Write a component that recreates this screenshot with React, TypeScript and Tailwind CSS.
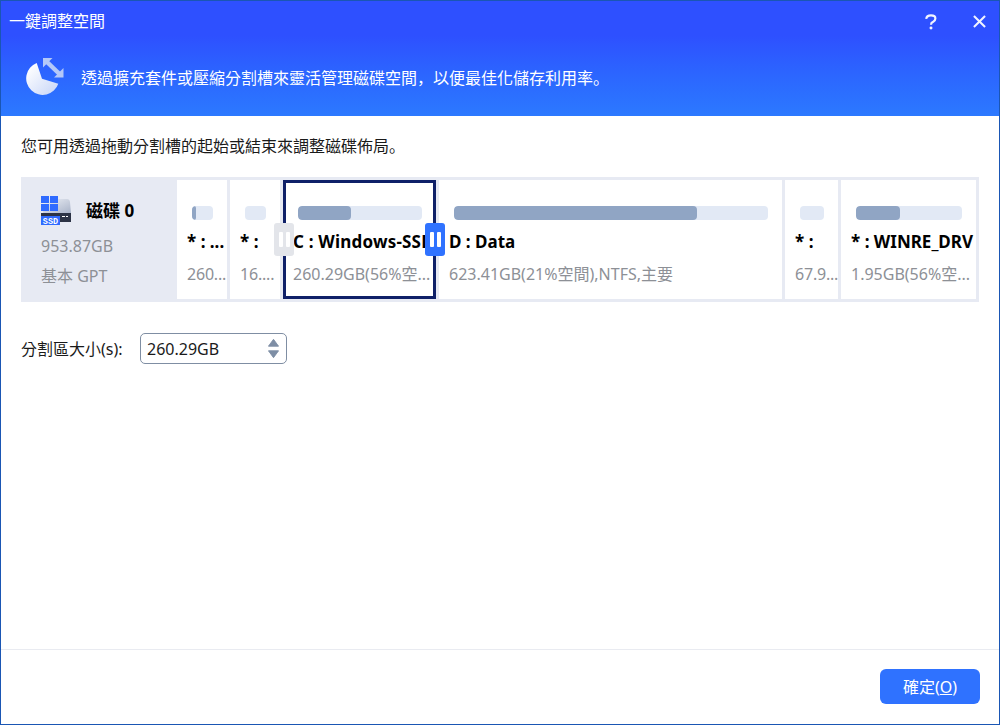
import React from 'react';

const font = '[font-family:"Noto_Sans","Noto_Sans_CJK_TC",sans-serif]';
// the reference sets its full-stop and comma in the lower left of the cell
const punct = '[font-family:"Noto_Sans_CJK_SC",sans-serif]';

interface PartitionProps {
  width: string;
  label: string;
  info: string;
  fill: string;
  tight?: boolean;
}

function PieIcon() {
  return (
    <svg width="40" height="40" viewBox="0 0 40 40" className="shrink-0">
      <defs>
        <linearGradient id="pie" x1="0.1" y1="0.1" x2="0.9" y2="0.9">
          <stop offset="0" stopColor="#ffffff" />
          <stop offset="1" stopColor="#ccd9f8" />
        </linearGradient>
      </defs>
      <path d="M11.700 6 A16.500 16.500 0 1 0 33.300 26.700 L17 21.700 Z" fill="url(#pie)" />
      <path d="M22 5 L35 17.500" stroke="#b4c8f8" strokeWidth="4.500" fill="none" />
      <path d="M18 1 H27.500 L18 10.500 Z" fill="#b4c8f8" />
      <path d="M38.500 20.500 V11 L29 20.500 Z" fill="#b4c8f8" />
    </svg>
  );
}

function DiskIcon() {
  return (
    <svg width="31" height="30" viewBox="0 0 31 30" className="shrink-0">
      <defs>
        <linearGradient id="hdd" x1="0" y1="0" x2="1" y2="1">
          <stop offset="0" stopColor="#eef1f7" />
          <stop offset="1" stopColor="#a9b3c8" />
        </linearGradient>
      </defs>
      <path d="M2 17 L4 3 H26 Q28.500 3 29 6 L30 17 Z" fill="url(#hdd)" />
      <rect x="0" y="17" width="30" height="9" fill="#2c3345" />
      <rect x="21" y="20" width="3" height="1" fill="#ffffff" />
      <rect x="25" y="20" width="2" height="1" fill="#ffffff" />
      <rect x="0" y="0" width="8" height="7" fill="#2f6bff" />
      <rect x="9" y="0" width="8" height="7" fill="#2f6bff" />
      <rect x="0" y="8" width="8" height="7" fill="#2f6bff" />
      <rect x="9" y="8" width="8" height="7" fill="#2f6bff" />
      <rect x="0" y="20" width="19" height="9" fill="#2f6bff" />
      <text x="9.500" y="27.600" textAnchor="middle" fontSize="8.500" fontWeight="700" fill="#ffffff" fontFamily="Liberation Mono, monospace">SSD</text>
    </svg>
  );
}

function Partition({ width, label, info, fill, tight }: PartitionProps) {
  return (
    <div className={`${width} shrink-0 h-full bg-white pt-[26px] overflow-hidden`}>
      <div className="ml-[15px] mr-[14px] h-[14px] rounded-[4px] bg-[#e2e9f5] overflow-hidden">
        <div className={`${fill} h-full rounded-[4px] bg-[#90a5c4]`}></div>
      </div>
      <div className="ml-[10px] mt-[11px] text-[17px] leading-[22px] font-bold text-black whitespace-nowrap">
        {label}
      </div>
      <div className={`ml-[10px] mt-[10px] text-[16px] leading-[22px] text-[#8d9096] whitespace-nowrap ${tight ? 'tracking-[-0.2px]' : ''}`}>
        {info}
      </div>
    </div>
  );
}

function Handle({ className }: { className: string }) {
  return (
    <div className={`absolute top-[43px] w-[20px] h-[33px] rounded-[3px] flex justify-center gap-[3px] pt-[9px] ${className}`}>
      <div className="w-[4px] h-[15px] bg-white rounded-[1px]"></div>
      <div className="w-[4px] h-[15px] bg-white rounded-[1px]"></div>
    </div>
  );
}

export default function App() {
  return (
    <div className={`${font} w-[1000px] h-[725px] flex flex-col bg-white border border-[#1a56b4] overflow-hidden`}>
      {/* Header */}
      <div className="h-[115px] shrink-0 bg-gradient-to-b from-[#2e50ff] from-30% to-[#2c79ff] text-white">
        <div className="h-[41px] flex items-center pl-[8px] pr-[13px]">
          <div className="text-[16px] flex-1 -mt-[2px]">一鍵調整空間</div>
          <svg width="14" height="18" viewBox="0 0 16 18" className="mr-[35px]">
            <path d="M2.500 5.500 Q3 1.500 8 1.500 Q13 1.500 13 5 Q13 7.500 10.500 8.800 Q8 10 8 12" fill="none" stroke="#f0f3ff" strokeWidth="2.500" />
            <circle cx="8" cy="15.800" r="1.700" fill="#f0f3ff" />
          </svg>
          <svg width="13" height="13" viewBox="0 0 14 14">
            <path d="M1 1 L13 13 M13 1 L1 13" stroke="#f0f3ff" strokeWidth="2.200" fill="none" />
          </svg>
        </div>
        <div className="flex items-center pl-[24px] gap-[16px] mt-[15px]">
          <PieIcon />
          <div className="text-[16px] mt-[1px]">
            透過擴充套件或壓縮分割槽來靈活管理磁碟空間<span className={punct}>，</span>以便最佳化儲存利用率<span className={punct}>。</span>
          </div>
        </div>
      </div>

      {/* Body */}
      <div className="flex-1 pl-[20px] pr-[20px] pt-[17px]">
        <div className="text-[16px] leading-[24px] text-[#1a1a1a]">
          您可用透過拖動分割槽的起始或結束來調整磁碟佈局<span className={punct}>。</span>
        </div>

        <div className="mt-[19px] h-[125px] w-[958px] bg-[#e7eaf3] p-[3px] flex gap-[3px]">
          <div className="w-[153px] shrink-0 pl-[17px] pt-[16px] -mr-[3px]">
            <div className="flex items-center gap-[14px]">
              <DiskIcon />
              <div className="text-[17px] font-bold text-black">磁碟 0</div>
            </div>
            <div className="mt-[9px] text-[16px] leading-[22px] text-[#8d9096]">953.87GB</div>
            <div className="mt-[8px] text-[16px] leading-[22px] text-[#8d9096]">基本 GPT</div>
          </div>
          <Partition width="w-[50px]" label="* : ..." info="260..." fill="w-[4px]" tight />
          <Partition width="w-[50px]" label="* :" info="16...." fill="w-0" tight />

          {/* Selected partition with its drag handles */}
          <div className="relative w-[153px] shrink-0 h-full">
            <div className="h-full border-[3px] border-[#0f2068] bg-white pt-[23px]">
              <div className="ml-[12px] mr-[11px] h-[14px] rounded-[4px] bg-[#e2e9f5] overflow-hidden">
                <div className="w-[53px] h-full rounded-[4px] bg-[#90a5c4]"></div>
              </div>
              <div className="ml-[7px] mr-[1px] mt-[11px] text-[17px] tracking-[0.2px] leading-[22px] font-bold text-black whitespace-nowrap overflow-hidden">
                C : Windows-SSD
              </div>
              <div className="ml-[7px] mt-[10px] text-[16px] leading-[22px] text-[#8d9096] whitespace-nowrap">
                260.29GB(56%空...
              </div>
            </div>
            <Handle className="left-[-9px] bg-[#e3e5ea]" />
            <Handle className="right-[-9px] bg-[#2f72ff]" />
          </div>

          <Partition width="w-[343px]" label="D : Data" info="623.41GB(21%空間),NTFS,主要" fill="w-[243px]" />
          <Partition width="w-[53px]" label="* :" info="67.9..." fill="w-0" tight />
          <Partition width="w-[135px]" label="* : WINRE_DRV" info="1.95GB(56%空..." fill="w-[44px]" />
        </div>

        <div className="mt-[31px] flex items-center">
          <div className="text-[16px] text-[#1a1a1a] w-[119px] whitespace-nowrap">分割區大小(s):</div>
          <div className="w-[147px] h-[31px] border border-[#7f8ea3] rounded-[5px] flex items-center pl-[6px] pr-[7px]">
            <div className="flex-1 text-[16px] text-[#1a1a1a]">260.29GB</div>
            <svg width="11" height="21" viewBox="0 0 12 21">
              <path d="M6 0.500 L11.500 8 H0.500 Z M6 20.500 L0.500 13 H11.500 Z" fill="#7e8ea5" stroke="#7e8ea5" strokeLinejoin="round" />
            </svg>
          </div>
        </div>
      </div>

      {/* Footer */}
      <div className="h-[75px] shrink-0 border-t border-[#e9ebf1] flex justify-end items-start pt-[19px] pr-[19px]">
        <button className="w-[100px] h-[35px] rounded-[6px] bg-[#2f72ff] text-white text-[16px]">
          確定(<span className="underline">O</span>)
        </button>
      </div>
    </div>
  );
}
